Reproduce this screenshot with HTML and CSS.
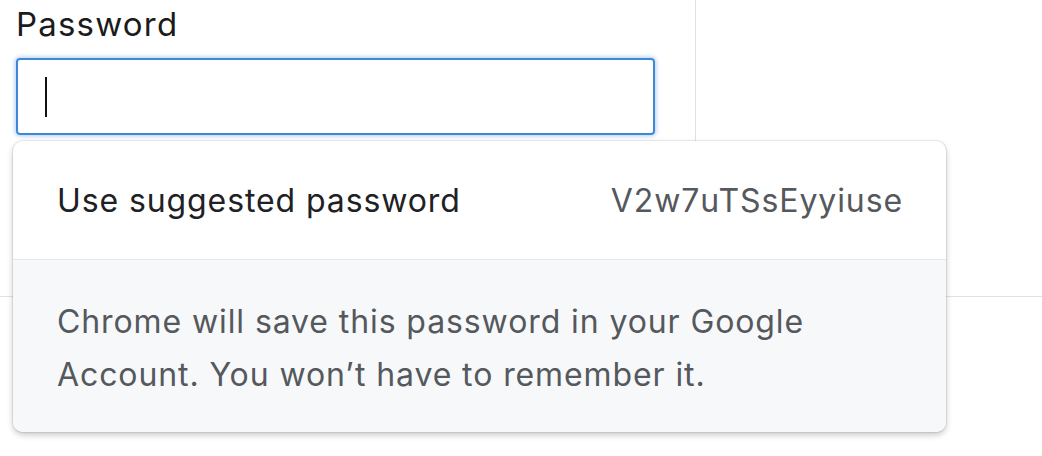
FILE: index.html
```html
<!DOCTYPE html>
<html lang="en">
<head>
<meta charset="utf-8">
<title>Password suggestion</title>
<link rel="stylesheet" href="styles.css">
</head>
<body>
<div class="page">
  <div class="form-row">
    <div class="field-col">
      <label class="label" for="pw">Password</label>
      <div class="input"><span class="caret"></span></div>
    </div>
  </div>
  <div class="popup">
    <div class="suggest">
      <span class="suggest-label">Use suggested password</span>
      <span class="suggest-value">V2w7uTSsEyyiuse</span>
    </div>
    <div class="note">Chrome will save this password in your Google Account. You won’t have to remember it.</div>
  </div>
</div>
</body>
</html>
```
FILE: styles.css
```css
html, body {
  margin: 0;
  padding: 0;
  background: #ffffff;
}
body {
  font-family: Inter, "Liberation Sans", Arial, sans-serif;
  width: 1042px;
  height: 456px;
  overflow: hidden;
}
.page {
  position: relative;
  width: 1042px;
  height: 456px;
}
.form-row {
  height: 296px;
  border-bottom: 1px solid #e2e2e2;
  display: flex;
}
.field-col {
  width: 696px;
  border-right: 1px solid #e2e2e2;
  display: flex;
  flex-direction: column;
  padding-left: 16px;
  box-sizing: border-box;
}
.label {
  font-size: 33px;
  line-height: 40px;
  height: 40px;
  margin-top: 4px;
  color: #1b1b1b;
  letter-spacing: 1.2px;
}
.input {
  margin-top: 14px;
  width: 639px;
  height: 77px;
  box-sizing: border-box;
  border: 2px solid #3f88d8;
  border-radius: 4px;
  box-shadow: 0 0 4px 1px rgba(76, 144, 222, 0.45);
  display: flex;
  align-items: center;
  padding-left: 27px;
}
.caret {
  width: 2px;
  height: 40px;
  background: #111;
}
.popup {
  position: absolute;
  left: 13px;
  top: 141px;
  width: 933px;
  border-radius: 10px;
  overflow: hidden;
  background: #ffffff;
  box-shadow: 0 0 0 1px rgba(0, 0, 0, 0.07), 0 3px 6px rgba(0, 0, 0, 0.22);
}
.suggest {
  height: 118px;
  display: flex;
  align-items: center;
  justify-content: space-between;
  padding: 0 44px;
  border-bottom: 1px solid #e6e7ea;
  font-size: 32px;
  letter-spacing: 0.9px;
}
.suggest-label {
  color: #202124;
}
.suggest-value {
  color: #55585d;
  margin-right: -1px;
}
.note {
  background: #f7f8fa;
  padding: 35px 44px 31px;
  font-size: 32px;
  line-height: 53px;
  letter-spacing: 0.9px;
  color: #55585d;
}
```
